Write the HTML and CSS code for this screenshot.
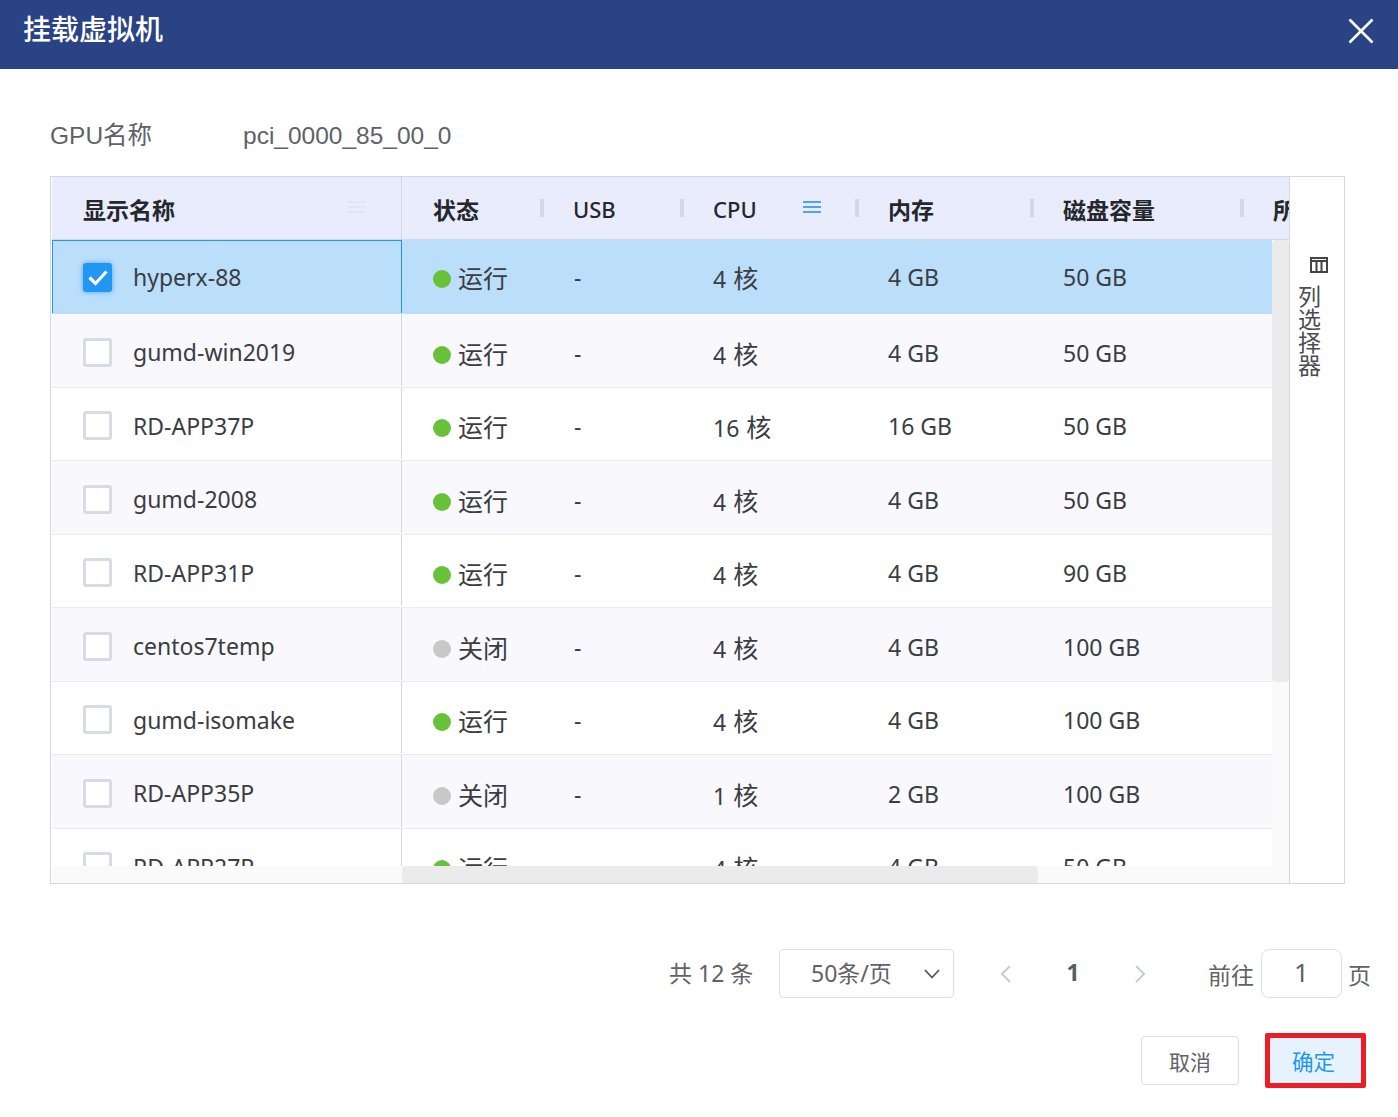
FILE: index.html
```html
<!DOCTYPE html>
<html lang="zh-CN">
<head>
    <meta charset="UTF-8">
    <title>挂载虚拟机</title>
    <link rel="stylesheet" href="styles.css">
</head>
<body>
    <div class="dialog">
        <div class="dialog-header">
            <span class="dialog-title">挂载虚拟机</span>
            <svg class="close-icon" width="26" height="26" viewBox="0 0 26 26"><path d="M1.5 1.5 L24.5 24.5 M24.5 1.5 L1.5 24.5" stroke="#fff" stroke-width="2.6" fill="none"/></svg>
        </div>

        <div class="info-row">
            <span class="info-label">GPU名称</span>
            <span class="info-value">pci_0000_85_00_0</span>
        </div>

        <div class="table-box">
            <div class="table-wrap">
                <div class="row head-row">
                    <div class="cell col-name">显示名称<svg class="col-menu col-menu-faint" width="20" height="14" viewBox="0 0 20 14"><path d="M1 2h18M1 7h18M1 12h18" stroke="#dfe5f5" stroke-width="2"/></svg></div>
                    <div class="cell col-state">状态<i class="resizer"></i></div>
                    <div class="cell col-usb latin">USB<i class="resizer"></i></div>
                    <div class="cell col-cpu latin">CPU<svg class="col-menu" width="20" height="14" viewBox="0 0 20 14"><path d="M1 2h18M1 7h18M1 12h18" stroke="#4da3f5" stroke-width="2"/></svg><i class="resizer"></i></div>
                    <div class="cell col-mem">内存<i class="resizer"></i></div>
                    <div class="cell col-disk">磁盘容量<i class="resizer"></i></div>
                    <div class="cell col-more">所属</div>
                </div>
                <div class="table-body">
                    <div class="row selected">
                        <div class="cell col-name"><span class="check checked"><svg width="20" height="17" viewBox="0 0 20 17"><path d="M1.5 8.5 L7.5 14.5 L18.5 2.5" stroke="#fff" stroke-width="3.2" fill="none"/></svg></span>hyperx-88</div>
                        <div class="cell col-state"><i class="dot on"></i><span class="zh">运行</span></div>
                        <div class="cell col-usb">-</div>
                        <div class="cell col-cpu"><span>4 <span class="zh">核</span></span></div>
                        <div class="cell col-mem">4 GB</div>
                        <div class="cell col-disk">50 GB</div>
                    </div>
                    <div class="row tint">
                        <div class="cell col-name"><span class="check"></span>gumd-win2019</div>
                        <div class="cell col-state"><i class="dot on"></i><span class="zh">运行</span></div>
                        <div class="cell col-usb">-</div>
                        <div class="cell col-cpu"><span>4 <span class="zh">核</span></span></div>
                        <div class="cell col-mem">4 GB</div>
                        <div class="cell col-disk">50 GB</div>
                    </div>
                    <div class="row">
                        <div class="cell col-name"><span class="check"></span>RD-APP37P</div>
                        <div class="cell col-state"><i class="dot on"></i><span class="zh">运行</span></div>
                        <div class="cell col-usb">-</div>
                        <div class="cell col-cpu"><span>16 <span class="zh">核</span></span></div>
                        <div class="cell col-mem">16 GB</div>
                        <div class="cell col-disk">50 GB</div>
                    </div>
                    <div class="row tint">
                        <div class="cell col-name"><span class="check"></span>gumd-2008</div>
                        <div class="cell col-state"><i class="dot on"></i><span class="zh">运行</span></div>
                        <div class="cell col-usb">-</div>
                        <div class="cell col-cpu"><span>4 <span class="zh">核</span></span></div>
                        <div class="cell col-mem">4 GB</div>
                        <div class="cell col-disk">50 GB</div>
                    </div>
                    <div class="row">
                        <div class="cell col-name"><span class="check"></span>RD-APP31P</div>
                        <div class="cell col-state"><i class="dot on"></i><span class="zh">运行</span></div>
                        <div class="cell col-usb">-</div>
                        <div class="cell col-cpu"><span>4 <span class="zh">核</span></span></div>
                        <div class="cell col-mem">4 GB</div>
                        <div class="cell col-disk">90 GB</div>
                    </div>
                    <div class="row tint">
                        <div class="cell col-name"><span class="check"></span>centos7temp</div>
                        <div class="cell col-state"><i class="dot off"></i><span class="zh">关闭</span></div>
                        <div class="cell col-usb">-</div>
                        <div class="cell col-cpu"><span>4 <span class="zh">核</span></span></div>
                        <div class="cell col-mem">4 GB</div>
                        <div class="cell col-disk">100 GB</div>
                    </div>
                    <div class="row">
                        <div class="cell col-name"><span class="check"></span>gumd-isomake</div>
                        <div class="cell col-state"><i class="dot on"></i><span class="zh">运行</span></div>
                        <div class="cell col-usb">-</div>
                        <div class="cell col-cpu"><span>4 <span class="zh">核</span></span></div>
                        <div class="cell col-mem">4 GB</div>
                        <div class="cell col-disk">100 GB</div>
                    </div>
                    <div class="row tint">
                        <div class="cell col-name"><span class="check"></span>RD-APP35P</div>
                        <div class="cell col-state"><i class="dot off"></i><span class="zh">关闭</span></div>
                        <div class="cell col-usb">-</div>
                        <div class="cell col-cpu"><span>1 <span class="zh">核</span></span></div>
                        <div class="cell col-mem">2 GB</div>
                        <div class="cell col-disk">100 GB</div>
                    </div>
                    <div class="row">
                        <div class="cell col-name"><span class="check"></span>RD-APP27P</div>
                        <div class="cell col-state"><i class="dot on"></i><span class="zh">运行</span></div>
                        <div class="cell col-usb">-</div>
                        <div class="cell col-cpu"><span>4 <span class="zh">核</span></span></div>
                        <div class="cell col-mem">4 GB</div>
                        <div class="cell col-disk">50 GB</div>
                    </div>
                </div>
                <!-- scrollbars sit over the table body -->
                <div class="scroll-v"><div class="thumb-v"></div></div>
                <div class="scroll-h"><div class="thumb-h"></div></div>
            </div>
            <div class="side-panel">
                <svg width="18" height="16" viewBox="0 0 18 16"><path d="M1 1h16v14H1z M1 4h16 M6.5 4v11 M11.5 4v11" stroke="#444" stroke-width="2" fill="none"/></svg>
                <span class="side-text">列选择器</span>
            </div>
        </div>

        <div class="pager">
            <span class="total">共 12 条</span>
            <div class="size-select">50条/页<svg width="16" height="10" viewBox="0 0 16 10"><path d="M1 1 L8 8.5 L15 1" stroke="#555" stroke-width="1.8" fill="none"/></svg></div>
            <svg class="arrow" width="12" height="18" viewBox="0 0 12 18"><path d="M10 1 L2 9 L10 17" stroke="#c6cbd6" stroke-width="2" fill="none"/></svg>
            <span class="page-num">1</span>
            <svg class="arrow" width="12" height="18" viewBox="0 0 12 18"><path d="M2 1 L10 9 L2 17" stroke="#c6cbd6" stroke-width="2" fill="none"/></svg>
            <span class="goto">前往</span>
            <div class="page-input">1</div>
            <span class="goto-end">页</span>
        </div>

        <div class="actions">
            <div class="btn">取消</div>
            <div class="btn btn-ok">确定</div>
        </div>
    </div>
</body>
</html>
```

FILE: styles.css
```css
body {
    margin: 0;
    background-color: #fff;
    font-family: "Noto Sans", "Noto Sans CJK SC", sans-serif;
    color: #303133;
}

.dialog {
    width: 1398px;
    height: 1117px;
    overflow: hidden;
}

.dialog-header {
    height: 69px;
    background-color: #2a4385;
    display: flex;
    align-items: center;
    justify-content: space-between;
    padding: 0 24px 8px 23px;
    box-sizing: border-box;
}

.dialog-title {
    color: #fff;
    font-family: "Liberation Sans", "Noto Sans CJK SC", sans-serif;
    font-size: 28px;
    font-weight: 500;
    padding-bottom: 5px;
}

.info-row {
    display: flex;
    height: 107px;
    padding: 48px 0 0 50px;
    box-sizing: border-box;
    font-family: "Liberation Sans", "Noto Sans CJK SC", sans-serif;
    font-size: 24.5px;
    line-height: 38px;
    color: #606266;
}

.info-label {
    width: 193px;
}

.table-box {
    margin-left: 50px;
    width: 1295px;
    height: 708px;
    box-sizing: border-box;
    border: 1px solid #d3d7e4;
    display: flex;
}

.table-wrap {
    width: 1237px;
    position: relative;
    overflow: hidden;
    margin-left: 1px;
}

.row {
    display: flex;
    height: 73.5px;
    box-sizing: border-box;
    border-bottom: 1px solid #e9eaf3;
    width: 1400px;
    background-color: #fff;
}

.tint {
    background-color: #f8f8fd;
}

.selected {
    background-color: #bbdefb;
    border-bottom-color: #bbdefb;
    height: 74px;
}

.head-row {
    height: 63px;
    background-color: #e9ecfd;
    border-bottom: 1px solid #d3d7e4;
    font-weight: 700;
}

.table-body {
    height: 626px;
    overflow: hidden;
}

.cell {
    display: flex;
    align-items: center;
    box-sizing: border-box;
    padding-left: 31px;
    font-size: 23px;
    position: relative;
    white-space: nowrap;
    color: #3a3d42;
}

.table-body .cell {
    padding-top: 5px;
}

.table-body .selected .cell {
    padding-top: 0;
}

.zh {
    font-size: 25px;
}

.head-row .cell {
    font-size: 23px;
    color: #24272b;
    padding-top: 1px;
}

.head-row .latin {
    font-size: 22px;
    font-weight: 500;
}

.col-name {
    width: 350px;
    border-right: 1px solid #d3d7e4;
    margin-bottom: 1px;
}

.selected .col-name {
    border: 1px solid #2196f3;
    border-bottom: none;
    padding-left: 30px;
    margin-bottom: 0;
}

.head-row .col-name {
    margin-bottom: 0;
}

.col-state { width: 140px; }
.col-usb { width: 140px; }
.col-cpu { width: 175px; word-spacing: 1px; }
.col-mem { width: 175px; }
.col-disk { width: 210px; }
.col-more { width: 200px; }

.table-body .col-usb {
    padding-left: 32px;
}

.resizer {
    position: absolute;
    right: -2px;
    top: 22px;
    width: 4px;
    height: 18px;
    background-color: #d3d7df;
}

.col-menu {
    position: absolute;
    right: 35px;
    top: 23px;
}

.col-menu-faint {
    right: 34px;
}

.check {
    width: 29px;
    height: 29px;
    box-sizing: border-box;
    border: 3px solid #d7dbe4;
    border-radius: 3px;
    background-color: #fff;
    margin-right: 21px;
    flex-shrink: 0;
}

.check.checked {
    background-color: #2196f3;
    border: none;
    box-shadow: 0 0 5px #45a8f7;
    display: flex;
    align-items: center;
    justify-content: center;
}

.dot {
    width: 18px;
    height: 18px;
    border-radius: 50%;
    margin: 4px 7px 0 0;
    flex-shrink: 0;
}

.dot.on {
    background-color: #67c23a;
}

.dot.off {
    background-color: #c8c8c8;
}

.scroll-v {
    position: absolute;
    right: 0;
    top: 63px;
    width: 17px;
    height: 644px;
    background-color: #fafafa;
}

.thumb-v {
    height: 442px;
    background-color: #ebebeb;
    border-radius: 4px;
}

.scroll-h {
    position: absolute;
    left: 0;
    bottom: 0;
    width: 1220px;
    height: 17px;
    background-color: #fafafa;
}

.thumb-h {
    margin-left: 350px;
    width: 636px;
    height: 17px;
    background-color: #ebebeb;
    border-radius: 4px;
}

.side-panel {
    flex: 1;
    border-left: 1px solid #d3d7e4;
    display: flex;
    flex-direction: column;
    align-items: center;
    padding: 80px 0 0 4px;
    box-sizing: border-box;
}

.side-text {
    writing-mode: vertical-rl;
    text-orientation: upright;
    font-family: "Liberation Sans", "Noto Sans CJK SC", sans-serif;
    font-size: 23px;
    line-height: 24px;
    margin: 12px 23px 0 0;
    color: #4a4d52;
}

.pager {
    height: 49px;
    margin-top: 65px;
    display: flex;
    align-items: center;
    font-size: 23px;
    color: #606266;
    padding-left: 669px;
}

.total {
    width: 110px;
    padding-bottom: 4px;
}

.size-select {
    width: 175px;
    height: 49px;
    box-sizing: border-box;
    border: 1px solid #dcdfe6;
    border-radius: 4px;
    display: flex;
    align-items: center;
    justify-content: space-between;
    padding: 0 13px 4px 31px;
    margin-right: 46px;
}

.size-select svg {
    margin-top: 4px;
}

.arrow {
    flex-shrink: 0;
}

.page-num {
    width: 122px;
    text-align: center;
    font-weight: 700;
    color: #5a5d62;
    padding-bottom: 4px;
}

.goto {
    margin-left: 62px;
}

.page-input {
    width: 81px;
    height: 49px;
    margin-left: 7px;
    box-sizing: border-box;
    border: 1px solid #dcdfe6;
    border-radius: 8px;
    display: flex;
    align-items: center;
    justify-content: center;
    font-size: 26px;
    padding-bottom: 4px;
}

.goto-end {
    margin-left: 6px;
}

.actions {
    display: flex;
    justify-content: flex-end;
    gap: 26px;
    margin-top: 35px;
    padding-right: 32px;
    align-items: center;
}

.btn {
    width: 98px;
    height: 49px;
    box-sizing: border-box;
    border: 1px solid #dcdfe6;
    border-radius: 4px;
    display: flex;
    align-items: center;
    justify-content: center;
    font-size: 21px;
    color: #606266;
}

.btn-ok {
    width: 101px;
    height: 55px;
    border: 5px solid #ee1c25;
    border-radius: 2px;
    background-color: #e6f3ff;
    color: #2196f3;
    padding-right: 4px;
    font-size: 21.5px;
}
```
